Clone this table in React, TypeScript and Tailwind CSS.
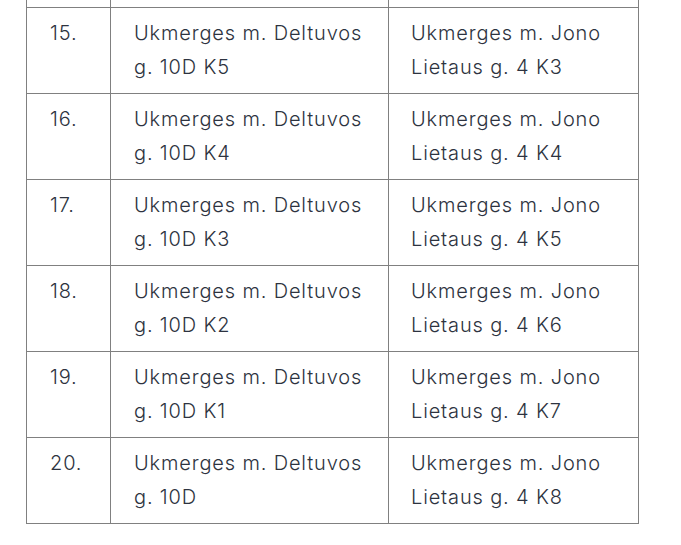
const rows = [
  { n: '15.', from: 'g. 10D K5', to: 'Lietaus g. 4 K3' },
  { n: '16.', from: 'g. 10D K4', to: 'Lietaus g. 4 K4' },
  { n: '17.', from: 'g. 10D K3', to: 'Lietaus g. 4 K5' },
  { n: '18.', from: 'g. 10D K2', to: 'Lietaus g. 4 K6' },
  { n: '19.', from: 'g. 10D K1', to: 'Lietaus g. 4 K7' },
  { n: '20.', from: 'g. 10D', to: 'Lietaus g. 4 K8' },
];

export default function App() {
  return (
    <div className="h-[545px] w-[681px] overflow-hidden bg-white font-['Inter',sans-serif] text-[20px] font-light leading-[34px] tracking-[0.85px] text-[#2d3340]">
      <table className="ml-[26px] w-[612px] table-fixed border-collapse">
        <colgroup>
          <col className="w-[84px]" />
          <col className="w-[278px]" />
          <col className="w-[250px]" />
        </colgroup>
        <tbody>
          {/* tail of the previous row */}
          <tr className="h-[7px]">
            <td className="border-x border-b border-[#808080] p-0" />
            <td className="border-x border-b border-[#808080] p-0" />
            <td className="border-x border-b border-[#808080] p-0" />
          </tr>
          {rows.map((r) => (
            <tr key={r.n} className="h-[86px]">
              <td className="border border-[#808080] px-[23px] pt-[8px] pb-[9px] align-top">{r.n}</td>
              <td className="border border-[#808080] px-[23px] pt-[8px] pb-[9px] align-top">
                Ukmerges m. Deltuvos
                <br />
                {r.from}
              </td>
              <td className="border border-[#808080] px-[22px] pt-[8px] pb-[9px] align-top">
                Ukmerges m. Jono
                <br />
                {r.to}
              </td>
            </tr>
          ))}
        </tbody>
      </table>
    </div>
  );
}
